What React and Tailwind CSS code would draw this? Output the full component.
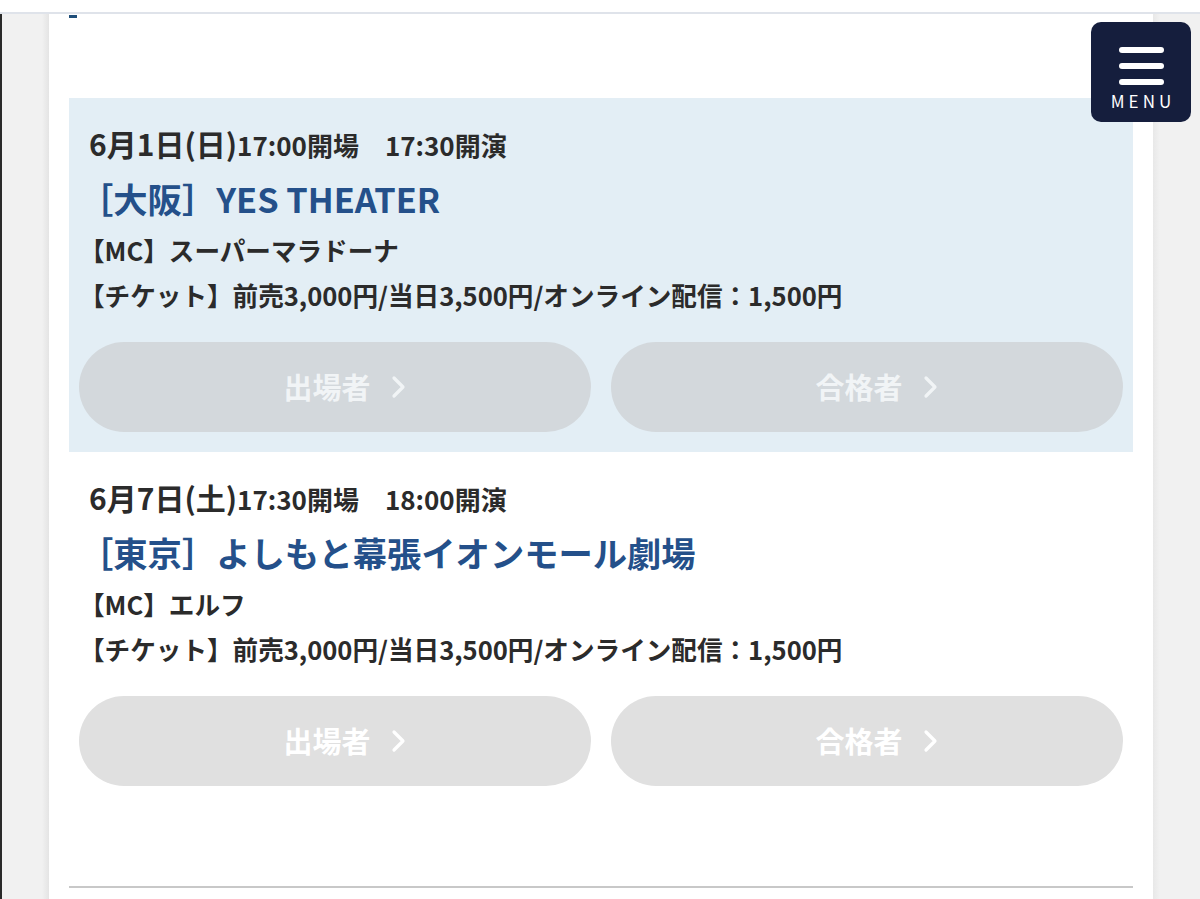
import React from "react";

const events = [
  {
    date: "6月1日(日)",
    time: "17:00開場　17:30開演",
    title: "［大阪］YES THEATER",
    mc: "【MC】スーパーマラドーナ",
    ticket: "【チケット】前売3,000円/当日3,500円/オンライン配信：1,500円",
    highlight: true,
  },
  {
    date: "6月7日(土)",
    time: "17:30開場　18:00開演",
    title: "［東京］よしもと幕張イオンモール劇場",
    mc: "【MC】エルフ",
    ticket: "【チケット】前売3,000円/当日3,500円/オンライン配信：1,500円",
    highlight: false,
  },
];

function Chevron() {
  return (
    <svg width="16" height="26" viewBox="0 0 16 26" fill="none">
      <polyline points="3,4 12,13 3,22" stroke="currentColor" strokeWidth="3.2" strokeLinecap="round" strokeLinejoin="round" />
    </svg>
  );
}

function PillButton({ label, highlight }) {
  return (
    <button
      className={`h-[90px] rounded-full flex items-center justify-center gap-[20px] pl-[20px] text-[29px] font-bold ${
        highlight ? "bg-[#d3d8dc] text-[#f1f4f6]" : "bg-[#e0e0e0] text-white"
      }`}
    >
      <span>{label}</span>
      <Chevron />
    </button>
  );
}

function EventCard({ ev }) {
  return (
    <div className={`px-[10px] pt-[28px] pb-[20px] ${ev.highlight ? "bg-[#e3eef5]" : "bg-white"}`}>
      <p className="pl-[10px] h-[36px] leading-[34px] font-bold text-[#2b2b2b] whitespace-nowrap">
        <span className="text-[30px]">{ev.date}</span>
        <span className="text-[26px]">{ev.time}</span>
      </p>
      <h2 className="mt-[12px] h-[48px] leading-[48px] text-[34.3px] font-bold text-[#24508a] whitespace-nowrap">{ev.title}</h2>
      <p className="mt-[10px] h-[36px] leading-[36px] text-[25.6px] font-bold text-[#2b2b2b]">{ev.mc}</p>
      <p className="mt-[9px] h-[36px] leading-[36px] text-[25.6px] font-bold text-[#2b2b2b] whitespace-nowrap">{ev.ticket}</p>
      <div className="mt-[29px] grid grid-cols-2 gap-[20px]">
        <PillButton label="出場者" highlight={ev.highlight} />
        <PillButton label="合格者" highlight={ev.highlight} />
      </div>
    </div>
  );
}

export default function App() {
  return (
    <div
      className="relative h-[899px] overflow-hidden bg-[#f0f0f0]"
      style={{ fontFamily: '"Noto Sans CJK JP", "Noto Sans", sans-serif' }}
    >
      <div className="h-[14px] bg-white border-b-2 border-[#dfe3ea]" />
      <div className="flex h-[885px]">
        <div className="w-[49px] border-l-2 border-[#2a2a2a] bg-gradient-to-r from-[#f1f1f1] from-85% to-[#e4e4e4]" />
        <main className="w-[1104px] bg-white px-[20px]">
          <div className="mt-[1px] w-[8px] h-[3px] bg-[#1f4e79]" />
          <div className="mt-[80px]">
            {events.map((ev) => (
              <EventCard key={ev.title} ev={ev} />
            ))}
          </div>
          <div className="mt-[80px] h-[2px] bg-[#c8c8c8]" />
        </main>
        <div className="flex-1 bg-gradient-to-r from-[#e8e8e8] to-[#f1f1f1] to-15%" />
      </div>

      <button className="absolute top-[22px] left-[1091px] w-[100px] h-[100px] rounded-[10px] bg-[#151e3d] flex flex-col items-center pt-[25px]">
        <span className="block w-[45px] h-[6px] rounded-full bg-white" />
        <span className="block mt-[10px] w-[45px] h-[6px] rounded-full bg-white" />
        <span className="block mt-[10px] w-[45px] h-[6px] rounded-full bg-white" />
        <span className="mt-[6px] text-[17px] leading-[20px] tracking-[4px] pl-[4px] text-white">MENU</span>
      </button>
    </div>
  );
}
